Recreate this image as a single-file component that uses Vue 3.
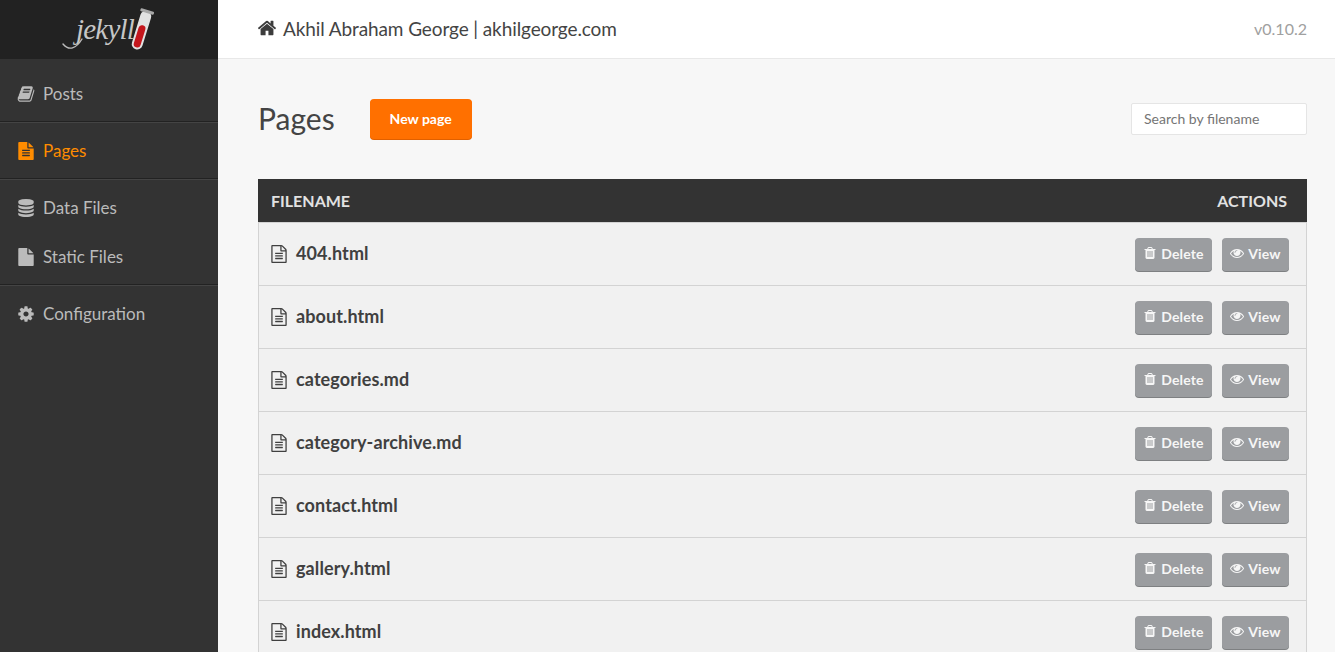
<script setup>
const paths = {
  home: 'M1472 992v480q0 26-19 45t-45 19h-384v-384h-256v384h-384q-26 0-45-19t-19-45v-480q0-1 .5-3t.5-3l575-474 575 474q1 2 1 6zm223-69l-62 74q-8 9-21 11h-3q-13 0-21-7l-692-577-692 577q-12 8-24 7-13-2-21-11l-62-74q-8-10-7-23.5t11-21.5l719-599q32-26 76-26t76 26l244 204v-195q0-14 9-23t23-9h192q14 0 23 9t9 23v408l219 182q10 8 11 21.5t-7 23.5z',
  fileText: 'M1596 476q14 14 28 36h-472v-472q22 14 36 28zm-476 164h544v1056q0 40-28 68t-68 28h-1344q-40 0-68-28t-28-68v-1600q0-40 28-68t68-28h800v544q0 40 28 68t68 28zm160 736v-64q0-14-9-23t-23-9h-704q-14 0-23 9t-9 23v64q0 14 9 23t23 9h704q14 0 23-9t9-23zm0-256v-64q0-14-9-23t-23-9h-704q-14 0-23 9t-9 23v64q0 14 9 23t23 9h704q14 0 23-9t9-23zm0-256v-64q0-14-9-23t-23-9h-704q-14 0-23 9t-9 23v64q0 14 9 23t23 9h704q14 0 23-9t9-23z',
  file: 'M1152 512v-472q22 14 36 28l408 408q14 14 28 36h-472zm-128 32q0 40 28 68t68 28h544v1056q0 40-28 68t-68 28h-1344q-40 0-68-28t-28-68v-1600q0-40 28-68t68-28h800v544z',
  fileO: 'M1596 380q28 28 48 76t20 88v1152q0 40-28 68t-68 28h-1344q-40 0-68-28t-28-68v-1600q0-40 28-68t68-28h896q40 0 88 20t76 48zm-444-244v376h376q-10-29-22-41l-313-313q-12-12-41-22zm384 1528v-1024h-416q-40 0-68-28t-28-68v-416h-768v1536h1280zm-1024-864q0-14 9-23t23-9h704q14 0 23 9t9 23v64q0 14-9 23t-23 9h-704q-14 0-23-9t-9-23v-64zm736 224q14 0 23 9t9 23v64q0 14-9 23t-23 9h-704q-14 0-23-9t-9-23v-64q0-14 9-23t23-9h704zm0 256q14 0 23 9t9 23v64q0 14-9 23t-23 9h-704q-14 0-23-9t-9-23v-64q0-14 9-23t23-9h704z',
  trash: 'M704 1376v-704q0-14-9-23t-23-9h-64q-14 0-23 9t-9 23v704q0 14 9 23t23 9h64q14 0 23-9t9-23zm256 0v-704q0-14-9-23t-23-9h-64q-14 0-23 9t-9 23v704q0 14 9 23t23 9h64q14 0 23-9t9-23zm256 0v-704q0-14-9-23t-23-9h-64q-14 0-23 9t-9 23v704q0 14 9 23t23 9h64q14 0 23-9t9-23zm-544-992h448l-48-117q-7-9-17-11h-317q-10 2-17 11zm928 32v64q0 14-9 23t-23 9h-96v948q0 83-47 143.500t-113 60.500h-832q-66 0-113-58.500t-47-141.500v-952h-96q-14 0-23-9t-9-23v-64q0-14 9-23t23-9h309l70-167q15-37 54-63t79-26h320q40 0 79 26t54 63l70 167h309q14 0 23 9t9 23z',
  eye: 'M1664 960q-152-236-381-353 61 104 61 225 0 185-131.500 316.500t-316.500 131.500-316.500-131.500-131.500-316.500q0-121 61-225-229 117-381 353 133 205 333.500 326.500t434.500 121.500 434.500-121.500 333.500-326.500zm-720-384q0-20-14-34t-34-14q-125 0-214.500 89.500t-89.500 214.500q0 20 14 34t34 14 34-14 14-34q0-86 61-147t147-61q20 0 34-14t14-34zm848 384q0 34-20 69-140 230-376.500 368.500t-499.500 138.500-499.500-139-376.500-368q-20-35-20-69t20-69q140-229 376.500-368t499.500-139 499.500 139 376.500 368q20 35 20 69z',
  database: 'M896 768q237 0 443-43t325-127v170q0 69-103 128t-280 93.500-385 34.500-385-34.500-280-93.500-103-128v-170q119 84 325 127t443 43zm0 768q237 0 443-43t325-127v170q0 69-103 128t-280 93.500-385 34.500-385-34.500-280-93.500-103-128v-170q119 84 325 127t443 43zm0-384q237 0 443-43t325-127v170q0 69-103 128t-280 93.500-385 34.500-385-34.500-280-93.500-103-128v-170q119 84 325 127t443 43zm0-1152q208 0 385 34.500t280 93.500 103 128v128q0 69-103 128t-280 93.500-385 34.500-385-34.500-280-93.500-103-128v-128q0-69 103-128t280-93.500 385-34.500z',
  cog: 'M1152 896q0-106-75-181t-181-75-181 75-75 181 75 181 181 75 181-75 75-181zm512-109v222q0 12-8 23t-20 13l-185 28q-19 54-39 91 35 50 107 138 10 12 10 25t-9 23q-27 37-99 108t-94 71q-12 0-26-9l-138-108q-44 23-91 38-16 136-29 186-7 28-36 28h-222q-14 0-24.500-8.500t-11.500-21.500l-28-184q-49-16-90-37l-141 107q-10 9-25 9-14 0-25-11-126-114-165-168-7-10-7-23 0-12 8-23 15-21 51-66.500t54-70.500q-27-50-41-99l-183-27q-13-2-21-12.500t-8-23.500v-222q0-12 8-23t19-13l186-28q14-46 39-92-40-57-107-138-10-12-10-24 0-10 9-23 26-36 98.500-107.500t94.500-71.500q13 0 26 10l138 107q44-23 91-38 16-136 29-186 7-28 36-28h222q14 0 24.500 8.500t11.500 21.500l28 184q49 16 90 37l142-107q9-9 24-9 13 0 25 10 129 119 165 170 7 8 7 22 0 12-8 23-15 21-51 66.500t-54 70.500q26 50 41 98l183 28q13 2 21 12.500t8 23.500z',
  book: 'M1703 478q40 57 18 129l-275 906q-19 64-76.500 107.500t-122.500 43.500h-923q-77 0-148.500-53.500t-99.500-131.500q-24-67-2-127 0-4 3-27t4-37q1-8-3-21.500t-3-19.500q2-11 8-21t16.500-23.500 16.500-23.500q23-38 45-91.500t30-91.500q3-10 .5-30t-.5-28q3-11 17-28t17-23q21-36 42-92t25-90q1-9-2.500-32t.5-28q4-13 22-30.500t22-22.500q19-26 42.500-84.500t27.500-96.500q1-8-3-25.500t-2-26.500q2-8 9-18t18-23 17-21q8-12 16.500-30.500t15-35 16-36 19.500-32 26.500-23.500 36-11.500 47.500 5.500l-1 3q38-9 51-9h761q74 0 114 56t18 130l-274 906q-36 119-71.500 153.500t-128.500 34.500h-869q-27 0-38 15-11 16-1 43 24 70 144 70h923q29 0 56-15.500t35-41.500l300-987q7-22 5-57 38 15 59 43zm-1064 2q-4 13 2 22.500t20 9.500h608q13 0 25.500-9.500t16.500-22.500l21-64q4-13-2-22.500t-20-9.500h-608q-13 0-25.500 9.500t-16.500 22.500zm-83 256q-4 13 2 22.500t20 9.500h608q13 0 25.500-9.500t16.500-22.500l21-64q4-13-2-22.500t-20-9.500h-608q-13 0-25.500 9.500t-16.500 22.500z'
}
const files = ['404.html', 'about.html', 'categories.md', 'category-archive.md', 'contact.html', 'gallery.html', 'index.html']
</script>

<template>
  <div class="app">
    <aside class="sidebar">
      <div class="logo">
        <svg class="logo-svg" width="100" height="45" viewBox="0 0 100 45">
          <path d="M4 36 C10 43 17 41 23 31" fill="none" stroke="#bdbdbd" stroke-width="1.4" stroke-linecap="round" />
          <text x="17" y="31" class="logo-text">jekyll</text>
          <g transform="rotate(17 82 22)">
            <rect x="77" y="2" width="11" height="40" rx="5.500" fill="#e2e2e2" />
            <rect x="79" y="17" width="7" height="23" rx="3.500" fill="#c4161c" />
            <rect x="75.500" y="1" width="14" height="3" rx="1" fill="#a8a8a8" />
          </g>
        </svg>
      </div>
      <ul class="nav nav-first">
        <li class="item"><svg class="ni" viewBox="0 0 1792 1792"><path :d="paths.book" /></svg>Posts</li>
      </ul>
      <ul class="nav">
        <li class="item active"><svg class="ni" viewBox="0 0 1792 1792"><path :d="paths.fileText" /></svg>Pages</li>
      </ul>
      <ul class="nav">
        <li class="item"><svg class="ni" viewBox="0 0 1792 1792"><path :d="paths.database" /></svg>Data Files</li>
        <li class="item"><svg class="ni" viewBox="0 0 1792 1792"><path :d="paths.file" /></svg>Static Files</li>
      </ul>
      <ul class="nav">
        <li class="item"><svg class="ni" viewBox="0 0 1792 1792"><path :d="paths.cog" /></svg>Configuration</li>
      </ul>
    </aside>
    <div class="main">
      <header class="topbar">
        <div class="site"><svg class="home" viewBox="0 0 1792 1792"><path :d="paths.home" /></svg>Akhil Abraham George | akhilgeorge.com</div>
        <div class="version">v0.10.2</div>
      </header>
      <div class="content">
        <div class="heading">
          <h1>Pages</h1>
          <button class="new">New page</button>
          <input class="search" placeholder="Search by filename" />
        </div>
        <div class="table">
          <div class="thead"><span>FILENAME</span><span>ACTIONS</span></div>
          <div v-for="f in files" :key="f" class="row">
            <div class="fname"><svg class="fi" viewBox="0 0 1792 1792"><path :d="paths.fileO" /></svg>{{ f }}</div>
            <div class="actions">
              <button class="act act-del"><svg viewBox="0 0 1792 1792"><path :d="paths.trash" /></svg>Delete</button>
              <button class="act act-view"><svg viewBox="0 0 1792 1792"><path :d="paths.eye" /></svg>View</button>
            </div>
          </div>
        </div>
      </div>
    </div>
  </div>
</template>

<style>
html, body { margin: 0; height: 100%; overflow: hidden; }
</style>

<style scoped>
.app {
  display: flex;
  height: 652px;
  overflow: hidden;
  font-family: Lato, "Liberation Sans", sans-serif;
  color: #333;
}
.sidebar {
  width: 218px;
  flex: none;
  background: #333;
  color: #bbb;
}
.logo {
  height: 59px;
  background: #222;
  display: flex;
  align-items: center;
  padding-left: 59px;
  box-sizing: border-box;
}
.logo-svg { display: block; margin-top: 1px; }
.logo-text {
  font-family: "Liberation Serif", serif;
  font-style: italic;
  font-size: 29px;
  fill: #c6c6c6;
  letter-spacing: -0.8px;
}
.nav {
  list-style: none;
  margin: 0;
  padding: 4px 0 3px;
  border-top: 1px solid #222;
  box-shadow: inset 0 1px 0 #444;
}
.nav-first { border-top: 0; box-shadow: none; padding-top: 10px; }
.item {
  height: 49px;
  display: flex;
  align-items: center;
  padding-left: 17px;
  font-size: 17px;
}
.item.active { color: #ff8c00; }
.ni {
  width: 18px;
  height: 18px;
  fill: currentColor;
  margin-right: 8px;
  flex: none;
}
.main { flex: 1; min-width: 0; background: #f7f7f7; }
.topbar {
  height: 59px;
  box-sizing: border-box;
  background: #fff;
  border-bottom: 1px solid #e8e8e8;
  display: flex;
  align-items: center;
  justify-content: space-between;
  padding: 0 28px 2px 40px;
}
.site { display: flex; align-items: center; font-size: 19px; letter-spacing: -0.1px; color: #444; }
.home { width: 20px; height: 20px; fill: #3c3c3c; margin: 0 6px 0 -1px; }
.version { font-size: 16px; color: #a0a0a0; }
.content { padding: 40px 28px 0 40px; }
.heading { display: flex; align-items: center; height: 41px; margin-bottom: 39px; }
h1 { margin: 0 35px 4px 0; font-size: 30px; font-weight: 400; color: #444; }
.new {
  width: 102px;
  height: 40px;
  margin-bottom: 1px;
  border: 0;
  border-radius: 4px;
  background: #ff7000;
  box-shadow: 0 1px 0 #e06000;
  color: #fff;
  font: 700 14px Lato, sans-serif;
  padding: 0 0 2px;
}
.search {
  margin: 0 0 1px auto;
  width: 176px;
  height: 32px;
  box-sizing: border-box;
  border: 1px solid #e5e5e5;
  border-radius: 2px;
  background: #fff;
  padding: 0 12px 2px;
  font: 400 14px Lato, sans-serif;
  color: #333;
  outline: none;
}
.search::placeholder { color: #757575; opacity: 1; }
.thead {
  height: 44px;
  box-sizing: border-box;
  background: #333;
  border-bottom: 1px solid #d3d3d3;
  color: #e2e2e2;
  font-size: 16px;
  font-weight: 700;
  display: flex;
  align-items: center;
  justify-content: space-between;
  padding: 0 20px 0 13px;
}
.row {
  height: 63px;
  box-sizing: border-box;
  background: #f1f1f1;
  border: 1px solid #d3d3d3;
  border-top: 0;
  display: flex;
  align-items: center;
  justify-content: space-between;
  padding: 0 17px 0 11px;
}
.fname { display: flex; align-items: center; padding-bottom: 2px; font-size: 18px; letter-spacing: 0.1px; font-weight: 700; color: #404040; }
.fi { width: 18px; height: 18px; fill: #404040; margin: 2px 8px 0 0; }
.actions { display: flex; gap: 10px; }
.act {
  height: 33px;
  border: 0;
  border-radius: 4px;
  background: #9b9da0;
  box-shadow: 0 1px 0 #7e8082;
  color: #f6f6f6;
  font: 700 14px Lato, sans-serif;
  letter-spacing: 0.15px;
  display: flex;
  align-items: center;
  justify-content: center;
  padding: 0 0 2px;
}
.act svg { width: 14px; height: 14px; fill: currentColor; margin-right: 4px; }
.act-del { width: 77px; }
.act-view { width: 67px; }
</style>
